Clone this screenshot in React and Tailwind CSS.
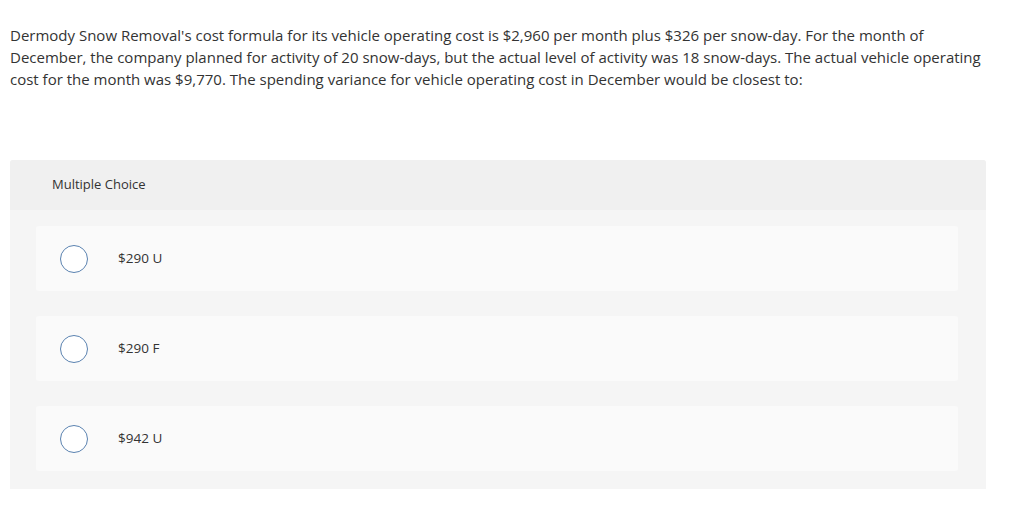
export default function App() {
  const options = ["$290 U", "$290 F", "$942 U"];

  return (
    <div className="w-[1024px] h-[505px] bg-white" style={{ fontFamily: "'Open Sans', sans-serif" }}>
      <p className="w-[994px] pl-[10px] pt-[24px] text-[15px] leading-[22px] text-[#333]">
        Dermody Snow Removal's cost formula for its vehicle operating cost is $2,960 per month plus $326 per snow-day. For the month of December, the company planned for activity of 20 snow-days, but the actual level of activity was 18 snow-days. The actual vehicle operating cost for the month was $9,770. The spending variance for vehicle operating cost in December would be closest to:
      </p>

      <div className="mt-[70px] ml-[10px] w-[976px] bg-[#f5f5f5] rounded-t-[3px] pb-[18px]">
        <div className="h-[50px] bg-[#f0f0f0] rounded-t-[3px] flex items-center pl-[42px] text-[13px] text-[#333]">
          Multiple Choice
        </div>
        <div className="flex flex-col gap-[25px] pt-[16px] pl-[26px] pr-[28px]">
          {options.map((o) => (
            <div key={o} className="h-[65px] bg-[#fafafa] rounded-[3px] flex items-center">
              <span className="ml-[24px] w-[28px] h-[28px] rounded-full border-[1.5px] border-[#5a82b0] bg-white shrink-0" />
              <span className="ml-[30px] text-[13.5px] text-[#333]">{o}</span>
            </div>
          ))}
        </div>
      </div>
    </div>
  );
}
